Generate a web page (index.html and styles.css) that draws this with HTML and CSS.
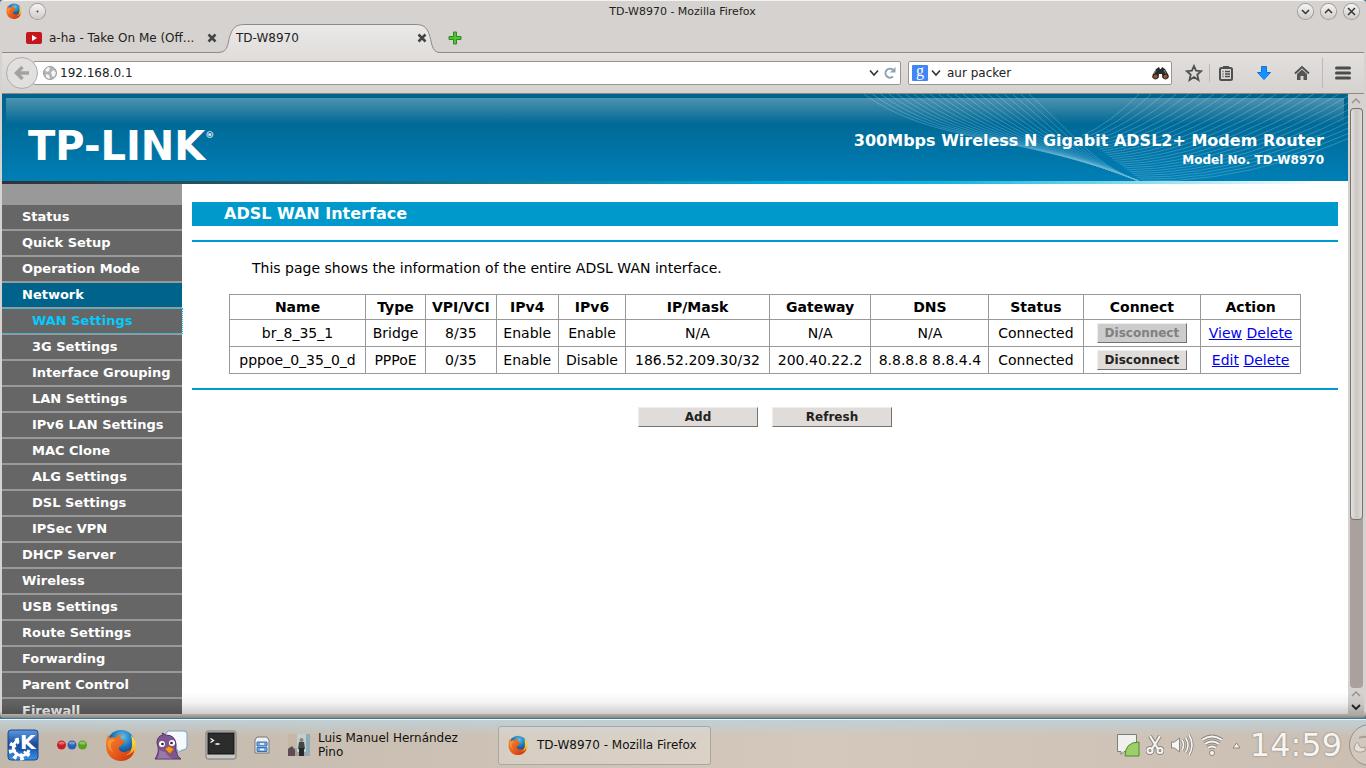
FILE: index.html
```html
<!DOCTYPE html>
<html lang="en">
<head>
    <meta charset="UTF-8">
    <meta name="viewport" content="width=device-width, initial-scale=1.0">
    <title>TD-W8970 - Mozilla Firefox</title>
    <link rel="stylesheet" href="styles.css">
</head>
<body>
    <!-- shared icons -->
    <svg class="defs" width="0" height="0" aria-hidden="true">
        <defs>
            <radialGradient id="globe" cx="55%" cy="25%" r="75%">
                <stop offset="0" stop-color="#5cc4ee"/>
                <stop offset="0.5" stop-color="#1c70b4"/>
                <stop offset="1" stop-color="#0b2c68"/>
            </radialGradient>
            <linearGradient id="fox" x1="0" y1="0" x2="1" y2="1">
                <stop offset="0" stop-color="#f58a2c"/>
                <stop offset="0.6" stop-color="#e4541a"/>
                <stop offset="1" stop-color="#c32d10"/>
            </linearGradient>
            <linearGradient id="tail" x1="0" y1="0" x2="0" y2="1">
                <stop offset="0" stop-color="#fff04a"/>
                <stop offset="1" stop-color="#f08a1c"/>
            </linearGradient>
            <symbol id="firefox" viewBox="0 0 32 32">
                <circle cx="16" cy="15" r="14" fill="url(#globe)"/>
                <path d="M26 6c4 4 5 7 5 12 0 6-4 11-10 13l-5-4c7-1 11-5 11-11 0-4 0-7-1-10z" fill="url(#tail)"/>
                <path d="M3 5c0 1 1 3 2 4 2-1 4-1 6 0 1-2 3-4 5-4-1 2-1 4 0 5l4 2c0 2-3 2-4 4 0 1 0 2-2 2-1 3 2 5 5 5 3 0 4-2 7-2-1 4-5 5-8 5 4 1 9-1 11-5 0 6-6 11-13 11C8 32 1 26 1 17 1 12 2 8 3 5z" fill="url(#fox)"/>
                <path d="M3 12c2-2 5-2 7-1l-4 3c-1 3 0 7 3 10-5-3-7-7-6-12z" fill="#fba345" opacity=".7"/>
            </symbol>
        </defs>
    </svg>

    <div class="window">
        <header class="titlebar">
            <div class="title-left">
                <svg width="16" height="16"><use href="#firefox"/></svg>
                <button class="round" aria-label="Keep on all desktops"><svg width="15" height="15" viewBox="0 0 15 15"><circle cx="7.500" cy="7.500" r="1" fill="#444"/></svg></button>
            </div>
            <div class="window-title">TD-W8970 - Mozilla Firefox</div>
            <div class="title-right">
                <button class="round" aria-label="Minimize"><svg width="15" height="15" viewBox="0 0 15 15"><path d="M4 6l3.500 3.500L11 6"/></svg></button>
                <button class="round" aria-label="Maximize"><svg width="15" height="15" viewBox="0 0 15 15"><path d="M4 9l3.500-3.500L11 9"/></svg></button>
                <button class="round" aria-label="Close"><svg width="15" height="15" viewBox="0 0 15 15"><path d="M4 4l7 7M11 4l-7 7"/></svg></button>
            </div>
        </header>

        <div class="tabs">
            <div class="tab">
                <svg width="16" height="12" viewBox="0 0 16 12"><rect width="16" height="12" rx="2" fill="#c4161c"/><path d="M6 3l5 3-5 3z" fill="#fff"/></svg>
                <span class="tab-text">a-ha - Take On Me (Off...</span>
                <button class="tab-close" aria-label="Close tab"><svg width="10" height="10" viewBox="0 0 10 10"><path d="M1.500 1.500l7 7M8.500 1.500l-7 7"/></svg></button>
            </div>
            <div class="tab active">
                <svg class="tab-shape" width="222" height="30" viewBox="0 0 222 30" preserveAspectRatio="none">
                    <defs><linearGradient id="tabfill" x1="0" y1="0" x2="0" y2="1"><stop offset="0" stop-color="#ebeae8"/><stop offset="1" stop-color="#e1dedc"/></linearGradient></defs>
                    <path d="M0 28.500C12 28.500 9 17 13 9 16 2 20 .5 27 .5H197c8 0 11 2 14 9 3 8 2 19 11 19V30H0z" fill="url(#tabfill)"/>
                    <path d="M0 28.500C12 28.500 9 17 13 9 16 2 20 .5 27 .5H197c8 0 11 2 14 9 3 8 2 19 11 19" fill="none" stroke="#8f8a86"/>
                </svg>
                <span class="tab-text">TD-W8970</span>
                <button class="tab-close" aria-label="Close tab"><svg width="10" height="10" viewBox="0 0 10 10"><path d="M1.500 1.500l7 7M8.500 1.500l-7 7"/></svg></button>
            </div>
            <button class="new-tab" aria-label="New tab"><svg width="14" height="14" viewBox="0 0 14 14"><path d="M5.500 1h3v4.500H13v3H8.500V13h-3V8.500H1v-3h4.500z" fill="#52c234" stroke="#2a8c1c"/></svg></button>
        </div>

        <div class="toolbar">
            <button class="back" aria-label="Back"><svg width="16" height="16" viewBox="0 0 16 16"><path d="M8.500 2L2.500 8l6 6M3 8h12" fill="none" stroke="#a3a2a0" stroke-width="3.500"/></svg></button>
            <div class="urlbar">
                <svg width="14" height="14" viewBox="0 0 14 14"><circle cx="7" cy="7" r="6.500" fill="#b4b4b4" stroke="#9c9c9c"/><path d="M2 4l3-3 2 1-1 3-2 1zM8 6l3-2 2 3-2 4-2-1zM3 8l3 1 1 3-1 1-3-2z" fill="#f4f4f4"/></svg>
                <input type="text" value="192.168.0.1" aria-label="Address">
                <button aria-label="History"><svg width="10" height="8" viewBox="0 0 10 8"><path d="M1 1.500L5 6l4-4.500" fill="none" stroke="#333" stroke-width="1.600"/></svg></button>
                <button aria-label="Reload"><svg width="12" height="12" viewBox="0 0 12 12"><path d="M9 9.500A4.500 4.500 0 1 1 9 2.800" fill="none" stroke="#8fa1b0" stroke-width="2"/><path d="M11.500 0v5.500H6z" fill="#8fa1b0"/></svg></button>
            </div>
            <div class="search">
                <button class="engine" aria-label="Search engine">
                    <span class="google">g</span>
                    <svg width="10" height="8" viewBox="0 0 10 8"><path d="M1 1.500L5 6l4-4.500" fill="none" stroke="#333" stroke-width="1.600"/></svg>
                </button>
                <input type="text" value="aur packer" aria-label="Search">
                <button aria-label="Go"><svg width="17" height="13" viewBox="0 0 17 13"><path d="M4 2l3-2 1 2h1l1-2 3 2 3.500 6v3h-6L10 7H7l-.5 4H.5V8z" fill="#2b2b2b"/><path d="M4 3L2 7M12 3l2 4" stroke="#888"/><circle cx="3.500" cy="9.500" r="2.500" fill="#9a5428" stroke="#222"/><circle cx="13.500" cy="9.500" r="2.500" fill="#9a5428" stroke="#222"/></svg></button>
            </div>
            <div class="tools">
                <button aria-label="Bookmark"><svg width="18" height="18" viewBox="0 0 18 18"><path d="M9 2l2.100 4.700 5 .5-3.800 3.400L13.500 16 9 13.100 4.500 16l1.200-5.400L1.900 7.200l5-.5z" fill="none" stroke="#505050" stroke-width="1.800"/></svg></button>
                <span class="sep"></span>
                <button aria-label="Bookmarks list"><svg width="16" height="16" viewBox="0 0 16 16"><path d="M5 1h6v3H5z" fill="#4f4f4f"/><rect x="2" y="3" width="12" height="12" rx="1.500" fill="none" stroke="#4f4f4f" stroke-width="2"/><path d="M4.500 6.500h1M7 6.500h5M4.500 9h1M7 9h5M4.500 11.500h1M7 11.500h5" stroke="#4f4f4f" stroke-width="1.300"/></svg></button>
                <button aria-label="Downloads"><svg width="16" height="16" viewBox="0 0 16 16"><path d="M5.500 1.500h5v6h4L8 14.500 1.500 7.500h4z" fill="#1590ff" stroke="#0b74dc"/></svg></button>
                <button aria-label="Home"><svg width="16" height="16" viewBox="0 0 16 16"><path d="M1 8.500L8 2l7 6.500" fill="none" stroke="#4f4f4f" stroke-width="1.800"/><path d="M3 9l5-4.500L13 9v6H9.500v-4h-3v4H3z" fill="#555"/></svg></button>
                <span class="sep tall"></span>
                <button aria-label="Menu"><svg width="16" height="14" viewBox="0 0 16 14"><path d="M1.500 2h13M1.500 7h13M1.500 12h13" stroke="#4c4c4c" stroke-width="3" stroke-linecap="round"/></svg></button>
            </div>
        </div>

        <div class="viewport">
            <div class="page">
                <div class="banner">
                    <svg class="waves" id="waves" width="506" height="87" viewBox="0 0 506 87" aria-hidden="true"></svg>
                    <div class="shine"></div>
                    <div class="logo">TP-LINK<sup>®</sup></div>
                    <div class="product">
                        <div class="product-name">300Mbps Wireless N Gigabit ADSL2+ Modem Router</div>
                        <div class="model">Model No. TD-W8970</div>
                    </div>
                </div>
                <div class="stripe"></div>
                <div class="columns">
                    <nav class="menu">
                        <a href="#">Status</a>
                        <a href="#">Quick Setup</a>
                        <a href="#">Operation Mode</a>
                        <a href="#" class="open">Network</a>
                        <a href="#" class="sub current">WAN Settings</a>
                        <a href="#" class="sub">3G Settings</a>
                        <a href="#" class="sub">Interface Grouping</a>
                        <a href="#" class="sub">LAN Settings</a>
                        <a href="#" class="sub">IPv6 LAN Settings</a>
                        <a href="#" class="sub">MAC Clone</a>
                        <a href="#" class="sub">ALG Settings</a>
                        <a href="#" class="sub">DSL Settings</a>
                        <a href="#" class="sub">IPSec VPN</a>
                        <a href="#">DHCP Server</a>
                        <a href="#">Wireless</a>
                        <a href="#">USB Settings</a>
                        <a href="#">Route Settings</a>
                        <a href="#">Forwarding</a>
                        <a href="#">Parent Control</a>
                        <a href="#">Firewall</a>
                    </nav>
                    <main class="content">
                        <h1>ADSL WAN Interface</h1>
                        <div class="panel">
                            <p>This page shows the information of the entire ADSL WAN interface.</p>
                            <table>
                                <colgroup>
                                    <col class="c-name"><col class="c-type"><col class="c-vpi"><col class="c-v4"><col class="c-v6"><col class="c-ip"><col class="c-gw"><col class="c-dns"><col class="c-status"><col class="c-connect"><col class="c-action">
                                </colgroup>
                                <thead>
                                    <tr>
                                        <th>Name</th><th>Type</th><th>VPI/VCI</th><th>IPv4</th><th>IPv6</th><th>IP/Mask</th><th>Gateway</th><th>DNS</th><th>Status</th><th>Connect</th><th>Action</th>
                                    </tr>
                                </thead>
                                <tbody>
                                    <tr>
                                        <td>br_8_35_1</td><td>Bridge</td><td>8/35</td><td>Enable</td><td>Enable</td><td>N/A</td><td>N/A</td><td>N/A</td><td>Connected</td>
                                        <td><button class="btn" disabled>Disconnect</button></td>
                                        <td><a href="#">View</a> <a href="#">Delete</a></td>
                                    </tr>
                                    <tr>
                                        <td>pppoe_0_35_0_d</td><td>PPPoE</td><td>0/35</td><td>Enable</td><td>Disable</td><td>186.52.209.30/32</td><td>200.40.22.2</td><td>8.8.8.8 8.8.4.4</td><td>Connected</td>
                                        <td><button class="btn">Disconnect</button></td>
                                        <td><a href="#">Edit</a> <a href="#">Delete</a></td>
                                    </tr>
                                </tbody>
                            </table>
                        </div>
                        <div class="actions">
                            <button class="btn wide">Add</button>
                            <button class="btn wide">Refresh</button>
                        </div>
                    </main>
                </div>
            </div>
            <div class="scrollbar">
                <svg width="12" height="14" viewBox="0 0 12 14"><path d="M2 9l4-4 4 4" fill="none" stroke="#969290" stroke-width="1.500"/></svg>
                <div class="track"><div class="thumb"></div></div>
                <svg width="12" height="12" viewBox="0 0 12 12"><path d="M2 8l4-4 4 4" fill="none" stroke="#969290" stroke-width="1.500"/></svg>
                <svg width="12" height="14" viewBox="0 0 12 14"><path d="M2 5l4 4 4-4" fill="none" stroke="#222" stroke-width="1.800"/></svg>
            </div>
            <div class="shade"></div>
        </div>
    </div>

    <footer class="taskbar">
        <div class="launchers">
            <button aria-label="Application launcher"><svg width="32" height="32" viewBox="0 0 32 32">
                <defs><linearGradient id="kde" x1="0" y1="0" x2="0" y2="1"><stop offset="0" stop-color="#5c97e2"/><stop offset="0.500" stop-color="#164a9a"/><stop offset="1" stop-color="#3a92e8"/></linearGradient></defs>
                <rect x="1" y="1" width="30" height="30" rx="3" fill="url(#kde)" stroke="#174a8e"/>
                <path d="M12 11a8 8 0 1 0 10 10" fill="none" stroke="#fff" stroke-width="3"/>
                <path d="M12 12a8 8 0 1 0 9 9" fill="none" stroke="#fff" stroke-width="7" stroke-dasharray="3 3"/>
                <circle cx="14" cy="18" r="4" fill="#1b519f"/>
                <text x="13" y="20" class="kde-k">K</text>
            </svg></button>
            <button aria-label="Activities"><svg width="32" height="12" viewBox="0 0 32 12">
                <circle cx="5.500" cy="6" r="4.500" fill="#c91f24"/><circle cx="16" cy="6" r="4.500" fill="#2a63b4"/><circle cx="26.500" cy="6" r="4.500" fill="#56a21c"/>
                <g fill="#fff" opacity=".35"><ellipse cx="5.500" cy="4" rx="3" ry="1.500"/><ellipse cx="16" cy="4" rx="3" ry="1.500"/><ellipse cx="26.500" cy="4" rx="3" ry="1.500"/></g>
            </svg></button>
            <button aria-label="Firefox"><svg width="32" height="32"><use href="#firefox"/></svg></button>
            <button aria-label="Pidgin"><svg width="34" height="32" viewBox="0 0 34 32">
                <path d="M14 2h16q3 0 3 3v12q0 4-4 4h-1l-5 3 1-3h-6L11 6z" fill="#f6f9fc" stroke="#7aa0c8"/>
                <path d="M3 14Q3 7 9 6l-1-2 4 2q9 0 10 9v7q1 6 5 8H1c4-6 4-10 2-16z" fill="#7d5590" stroke="#553366"/>
                <path d="M5 21q1 5-2 8.500h16q-6-2-7-6z" fill="#9a78aa"/>
                <circle cx="8" cy="15" r="3" fill="#fff"/><circle cx="18" cy="14" r="3" fill="#fff"/><circle cx="8.500" cy="15" r="1.300" fill="#222"/><circle cx="17.500" cy="14" r="1.300" fill="#222"/>
                <path d="M11 20l4-3 5 3-4 5z" fill="#f39a22" stroke="#b85c10"/>
            </svg></button>
            <button aria-label="Terminal"><svg width="32" height="30" viewBox="0 0 32 30">
                <rect x="1" y="1" width="30" height="28" rx="2" fill="#c8c8c8" stroke="#777"/>
                <rect x="3" y="3" width="26" height="21" fill="#2c2c2c" stroke="#111"/>
                <path d="M5.500 8.500l3 2-3 2M10.500 14h4" fill="none" stroke="#fff" stroke-width="1.300"/>
            </svg></button>
            <button aria-label="Files"><svg width="16" height="18" viewBox="0 0 16 18">
                <path d="M3 1h10l2 3v13H1V4z" fill="#f0f0f0" stroke="#777"/>
                <path d="M3 6h10v4H3zM3 11.500h10v4H3z" fill="#6ea8e4" stroke="#3d70ae"/>
                <path d="M6 8h4M6 13.500h4" stroke="#fff" stroke-width="1.500"/>
            </svg></button>
        </div>
        <div class="user">
            <svg width="22" height="22" viewBox="0 0 22 22">
                <rect width="22" height="22" fill="#a99c90"/><path d="M0 0h9v14H0z" fill="#c8b7a6"/><path d="M9 0h11v18H9z" fill="#bfcfd2"/><path d="M18 0h4v22h-4z" fill="#8dabb8"/>
                <path d="M0 15l4-3 3 4v6H0z" fill="#5d4b55"/><circle cx="13.500" cy="6" r="2" fill="#9b7c68"/><path d="M11 8h5l1 7h-7z" fill="#3f4748"/><path d="M11 14h5v8h-5z" fill="#26292c"/>
            </svg>
            <span>Luis Manuel Hernández Pino</span>
        </div>
        <button class="task"><svg width="20" height="20"><use href="#firefox"/></svg>TD-W8970 - Mozilla Firefox</button>
        <div class="tray">
            <svg width="24" height="24" viewBox="0 0 24 24"><path d="M1.500 1.500h19v17H8l-3 3v-3H1.500z" fill="#f0f0ef" stroke="#7d7d7b"/><path d="M23 9v14H9Q9 9 23 9z" fill="#9ccf66" stroke="#4f8a2c"/></svg>
            <svg width="18" height="20" viewBox="0 0 18 20"><g fill="none" stroke="#8a8580" stroke-width="4"><path d="M4 1l8 13M14 1L6 14"/><circle cx="4" cy="15.500" r="2.500"/><circle cx="14" cy="15.500" r="2.500"/></g><g fill="none" stroke="#f7f5f2" stroke-width="2"><path d="M4 1l8 13M14 1L6 14"/><circle cx="4" cy="15.500" r="2.500"/><circle cx="14" cy="15.500" r="2.500"/></g></svg>
            <svg width="24" height="24" viewBox="0 0 24 24"><path d="M1.500 9h3l5-4v14l-5-4h-3z" fill="#f7f5f2" stroke="#8a8580"/><g fill="none" stroke="#8a8580" stroke-width="3.200"><path d="M12 7q3 5 0 10M15.500 4.500q5 7.500 0 15M19 2q6 10 0 20"/></g><g fill="none" stroke="#f7f5f2" stroke-width="1.600"><path d="M12 7q3 5 0 10M15.500 4.500q5 7.500 0 15M19 2q6 10 0 20"/></g></svg>
            <svg width="24" height="22" viewBox="0 0 24 22"><g fill="none" stroke="#8a8580" stroke-width="3.800"><path d="M2 6q10-7 20 0M5 10q7-5 14 0M8 14q4-3 8 0"/></g><g fill="none" stroke="#f7f5f2" stroke-width="2"><path d="M2 6q10-7 20 0M5 10q7-5 14 0M8 14q4-3 8 0"/></g><circle cx="12" cy="19" r="2.500" fill="#f7f5f2" stroke="#8a8580"/></svg>
            <svg class="tray-more" width="9" height="7" viewBox="0 0 9 7"><path d="M1 6l3.500-5L8 6z" fill="#f7f5f2" stroke="#8a8580"/></svg>
            <span class="clock">14:59</span>
            <svg class="cashew" width="18" height="44" viewBox="0 0 18 44"><circle cx="22" cy="22" r="20.500" fill="#ffffff" fill-opacity=".15" stroke="#96908a"/><path d="M7 22q3-5 4 0 1 4 6 2v4q-8 3-11-2z" fill="#e6e0da" stroke="#a59e97"/><path d="M11 15q3-2 7-1" fill="none" stroke="#a59e97" stroke-width="2"/></svg>
        </div>
    </footer>
    <script src="script.js"></script>
</body>
</html>
```

FILE: styles.css
```css
* {
    box-sizing: border-box;
}

body {
    margin: 0;
    height: 100vh;
    display: flex;
    flex-direction: column;
    overflow: hidden;
    background-color: #3d7793;
    font-family: "DejaVu Sans", sans-serif;
    font-size: 12px;
    color: #222;
}

button {
    font-family: inherit;
    border: none;
    padding: 0;
    background: none;
    color: inherit;
}

svg {
    display: block;
    flex: none;
}

.defs {
    position: absolute;
}

.window {
    flex: 1;
    min-height: 0;
    display: flex;
    flex-direction: column;
    padding: 0 2px 4px;
    border-radius: 4px;
    border-top: 1px solid #f4f3f2;
    background: linear-gradient(to bottom, #d6d2cf 99%, #8b8783);
}

/* title bar and tabs */
.titlebar {
    display: grid;
    grid-template-columns: 1fr auto 1fr;
    align-items: center;
    height: 20px;
    padding: 0 5px 0 4px;
    font-size: 11px;
}

.title-left,
.title-right {
    display: flex;
    align-items: center;
    gap: 8px;
}

.title-right {
    justify-content: flex-end;
}

.round {
    width: 15px;
    height: 15px;
    border-radius: 50%;
    background: linear-gradient(to bottom, #f6f5f4, #cfcbc8);
    box-shadow: 0 0 0 1px #a09b97;
}

.round path {
    fill: none;
    stroke: #333;
    stroke-width: 1.5;
}

.tabs {
    display: flex;
    height: 32px;
    padding: 3px 10px 0;
    border-bottom: 1px solid #8f8a86;
    font-size: 12px;
}

.tab {
    display: flex;
    align-items: center;
    gap: 7px;
    width: 206px;
    padding: 0 1px 0 14px;
}

.tab-text {
    flex: 1;
    white-space: nowrap;
}

.tab-close path {
    fill: none;
    stroke: #444;
    stroke-width: 2.5;
}

.tab.active {
    position: relative;
    width: 222px;
    padding: 0 13px 0 18px;
}

.tab.active span,
.tab.active button {
    position: relative;
}

.tab-shape {
    position: absolute;
    left: 0;
    top: 0;
}

.new-tab {
    margin-left: 8px;
}

/* navigation toolbar */
.toolbar {
    display: flex;
    align-items: center;
    height: 41px;
    padding: 0 4px;
    background: linear-gradient(to bottom, #e2dfdd, #d6d2cf);
    border-bottom: 1px solid #8f8a86;
}

.back {
    display: flex;
    align-items: center;
    justify-content: center;
    z-index: 1;
    width: 32px;
    height: 32px;
    border: 1px solid #a9aeb8;
    border-radius: 50%;
    background-color: #e2dfdd;
}

.urlbar,
.search {
    display: flex;
    align-items: center;
    height: 24px;
    background-color: #fff;
    border: 1px solid #9a9591;
    border-radius: 2px;
}

.urlbar {
    flex: 1;
    gap: 5px;
    margin-left: -5px;
    padding: 0 4px 0 9px;
}

.urlbar input,
.search input {
    flex: 1;
    min-width: 0;
    border: none;
    outline: none;
    padding: 0;
    background: none;
    font-family: inherit;
    font-size: 12px;
    color: #222;
}

.urlbar input {
    margin-left: -2px;
}

.search {
    width: 264px;
    gap: 6px;
    margin-left: 7px;
    padding: 0 2px 0 3px;
}

.engine {
    display: flex;
    align-items: center;
    gap: 3px;
}

.google {
    width: 16px;
    height: 16px;
    border-radius: 1px;
    background-color: #4285f4;
    color: #fff;
    font-family: "Liberation Serif", serif;
    font-size: 16px;
    line-height: 12px;
}

.tools {
    display: flex;
    align-items: center;
    padding: 0 9px 0 13px;
}

.tools button {
    margin-right: 22px;
}

.tools button:first-child {
    margin-right: 6px;
}

.tools button:last-child {
    margin-right: 0;
}

.sep {
    width: 1px;
    height: 18px;
    margin-right: 8px;
    background-color: #b9bac0;
}

.sep.tall {
    height: 30px;
    margin: 0 12px 0 -10px;
}

/* router page */
.viewport {
    position: relative;
    flex: 1;
    min-height: 0;
    display: flex;
    overflow: hidden;
}

.page {
    flex: 1;
    background-color: #fff;
}

.banner {
    position: relative;
    display: flex;
    justify-content: space-between;
    align-items: center;
    height: 87px;
    padding: 16px 24px 0 26px;
    background: linear-gradient(to bottom, #00638c, #006a97 35%, #007fb6);
    color: #fff;
}

.waves {
    position: absolute;
    right: 0;
    top: 0;
    fill: none;
    stroke: #6bb5d4;
    stroke-opacity: 0.45;
}

.shine {
    position: absolute;
    left: 4px;
    right: 4px;
    top: 4px;
    height: 26px;
    background: linear-gradient(to bottom, rgba(255, 255, 255, 0.3), rgba(255, 255, 255, 0));
}

.logo {
    position: relative;
    font-size: 40px;
    font-weight: bold;
    line-height: 40px;
}

.logo sup {
    font-size: 9px;
    line-height: 9px;
    vertical-align: 22px;
}

.product {
    position: relative;
    padding-top: 8px;
    text-align: right;
    font-weight: bold;
}

.product-name {
    font-size: 16px;
    line-height: 20px;
}

.model {
    line-height: 18px;
}

.stripe {
    height: 3px;
    background: linear-gradient(to right, #333, #00a9d8 60%, #10b4dc 70%, #fff 98%);
}

.columns {
    display: flex;
}

.menu {
    display: flex;
    flex-direction: column;
    gap: 2px;
    width: 180px;
    padding-top: 21px;
    background-color: #999;
}

.menu a {
    height: 24px;
    padding-left: 20px;
    background-color: #666;
    color: #fff;
    font-size: 13px;
    font-weight: bold;
    line-height: 24px;
    text-decoration: none;
}

.menu a.open {
    background-color: #00638c;
}

.menu a.sub {
    padding-left: 30px;
}

.menu a.current {
    z-index: 1;
    color: #00ccff;
    outline: 1px dotted #00ccff;
}

.content {
    flex: 1;
    padding: 18px 10px;
    color: #000;
    font-size: 14px;
}

h1 {
    margin: 0 0 14px;
    padding-left: 32px;
    background-color: #0099cc;
    color: #fff;
    font-size: 16px;
    line-height: 24px;
}

.panel {
    padding: 16px 37px 14px;
    border-top: 2px solid #0099cc;
    border-bottom: 2px solid #0099cc;
}

.panel p {
    margin: 0 0 16px;
    padding-left: 23px;
    line-height: 20px;
}

table {
    width: 100%;
    table-layout: fixed;
    border-collapse: collapse;
}

th,
td {
    height: 27px;
    padding: 0;
    border: 1px solid #999;
    text-align: center;
    white-space: nowrap;
}

th {
    height: 25px;
}

td a {
    color: #0000ee;
}

.c-name { width: 12.7%; }
.c-type { width: 5.6%; }
.c-vpi { width: 6.6%; }
.c-v4 { width: 5.8%; }
.c-v6 { width: 6.3%; }
.c-ip { width: 13.4%; }
.c-gw { width: 9.5%; }
.c-dns { width: 11%; }
.c-status { width: 8.8%; }
.c-connect { width: 11%; }
.c-action { width: 9.3%; }

.btn {
    width: 90px;
    height: 20px;
    border: 1px solid;
    border-color: #f0eeec #77726e #77726e #f0eeec;
    background-color: #e0dcd9;
    color: #222;
    font-size: 12px;
    font-weight: bold;
    vertical-align: middle;
}

.btn:disabled {
    background-color: #ccc;
    color: #808080;
}

.btn.wide {
    width: 120px;
}

.actions {
    display: flex;
    justify-content: center;
    gap: 14px;
    padding-top: 17px;
}

.scrollbar {
    display: flex;
    flex-direction: column;
    align-items: center;
    width: 16px;
    background-color: #d6d2cf;
}

.track {
    flex: 1;
    width: 13px;
    border-radius: 4px;
    background-color: #aaa19e;
}

.thumb {
    height: 71%;
    border: 1px solid #77726e;
    border-radius: 4px;
    background: linear-gradient(to right, #e4e1df, #cbc7c3, #dedbd8);
}

/* shadow that the panel throws on the window */
.shade {
    position: absolute;
    left: 0;
    right: 0;
    bottom: 0;
    height: 22px;
    background: linear-gradient(to bottom, rgba(0, 0, 0, 0), rgba(0, 0, 0, 0.05) 50%, rgba(0, 0, 0, 0.2));
}

/* desktop panel */
.taskbar {
    display: flex;
    align-items: center;
    height: 49px;
    margin-top: 1px;
    padding: 2px 0 0 7px;
    border-top: 1px solid #eef3f5;
    background: linear-gradient(to bottom, rgba(191, 208, 214, 1), rgba(191, 208, 214, 0) 16px), linear-gradient(to right, #c3b8ac, #d3c8bb 60%, #cbbfb3);
    color: #111;
}

.launchers {
    display: flex;
    align-items: center;
    gap: 17px;
}

.user {
    display: flex;
    align-items: center;
    gap: 8px;
    width: 210px;
    margin-left: 18px;
    line-height: 14px;
}

.user span {
    width: 150px;
}

.task {
    display: flex;
    align-items: center;
    gap: 9px;
    width: 213px;
    height: 39px;
    padding-left: 9px;
    border: 1px solid #aba69f;
    border-radius: 3px;
    background-color: rgba(255, 255, 255, 0.2);
    font-size: 12px;
    white-space: nowrap;
}

.tray {
    display: flex;
    align-items: center;
    gap: 6px;
    margin-left: auto;
}

.tray-more {
    margin: 0 3px 0 2px;
}

.clock {
    color: #f7f5f2;
    font-size: 32px;
    text-shadow: 0 0 2px #6f6a65;
}

.kde-k {
    fill: #fff;
    font-size: 20px;
    font-weight: bold;
}
```

FILE: script.js
```js
const waves = document.getElementById('waves');

function addWave(d) {
    const path = document.createElementNS('http://www.w3.org/2000/svg', 'path');
    path.setAttribute('d', d);
    waves.appendChild(path);
}

// left bundle, runs down to one point on the lower edge
for (let i = 0; i <= 20; i++) {
    const t = i / 20;
    addWave(`M${22 + 165 * t},0 C${90 + 140 * t},${50 - 12 * t} ${180 + 70 * t},${40 + 30 * t} 297,87`);
}

// right bundle, fans out to the upper right corner
for (let i = 0; i <= 24; i++) {
    const t = i / 24;
    const x = 297 + 300 * t;
    addWave(`M${x},0 Q${270 + 170 * t},${28 + 62 * t} ${240 + 60 * t},${42 + 45 * t}`);
}
```
